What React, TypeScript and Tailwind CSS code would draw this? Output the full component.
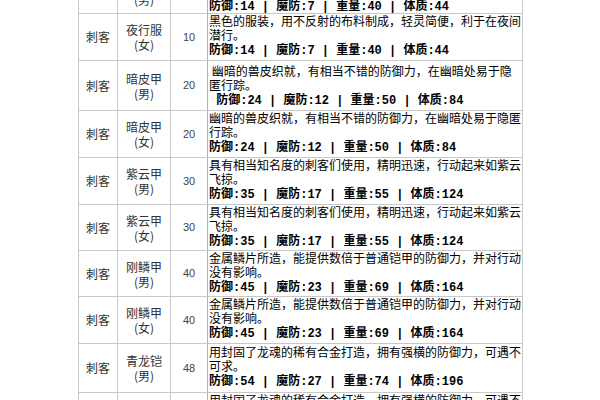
const cjk = "font-['Noto_Sans_CJK_SC',sans-serif]";

type Row = {
  name: string;
  sex: string;
  level: number;
  lines: string[];
  stats: string;
  h: string;
  pad?: string;
};

const yexing = ['黑色的服装，用不反射的布料制成，轻灵简便，利于在夜间', '潜行。'];
const qinglong = ['用封固了龙魂的稀有合金打造，拥有强横的防御力，可遇不', '可求。'];
const ziyun = ['具有相当知名度的刺客们使用，精明迅速，行动起来如紫云', '飞掠。'];
const gangLin = ['金属鳞片所造，能提供数倍于普通铠甲的防御力，并对行动', '没有影响。'];

const rows: Row[] = [
  { name: '夜行服', sex: '(男)', level: 10, lines: yexing, stats: '防御:14 | 魔防:7 | 重量:40 | 体质:44', h: 'h-[44px]' },
  { name: '夜行服', sex: '(女)', level: 10, lines: yexing, stats: '防御:14 | 魔防:7 | 重量:40 | 体质:44', h: 'h-[47px]' },
  {
    name: '暗皮甲', sex: '(男)', level: 20,
    lines: [' 幽暗的兽皮织就，有相当不错的防御力，在幽暗处易于隐', '匿行踪。'],
    stats: ' 防御:24 | 魔防:12 | 重量:50 | 体质:84', h: 'h-[50px]', pad: 'pt-[3px]',
  },
  { name: '暗皮甲', sex: '(女)', level: 20, lines: ['幽暗的兽皮织就，有相当不错的防御力，在幽暗处易于隐匿', '行踪。'], stats: '防御:24 | 魔防:12 | 重量:50 | 体质:84', h: 'h-[47px]' },
  { name: '紫云甲', sex: '(男)', level: 30, lines: ziyun, stats: '防御:35 | 魔防:17 | 重量:55 | 体质:124', h: 'h-[47px]' },
  { name: '紫云甲', sex: '(女)', level: 30, lines: ziyun, stats: '防御:35 | 魔防:17 | 重量:55 | 体质:124', h: 'h-[46px]' },
  { name: '刚鳞甲', sex: '(男)', level: 40, lines: gangLin, stats: '防御:45 | 魔防:23 | 重量:69 | 体质:164', h: 'h-[46px]' },
  { name: '刚鳞甲', sex: '(女)', level: 40, lines: gangLin, stats: '防御:45 | 魔防:23 | 重量:69 | 体质:164', h: 'h-[47px]' },
  { name: '青龙铠', sex: '(男)', level: 48, lines: qinglong, stats: '防御:54 | 魔防:27 | 重量:74 | 体质:196', h: 'h-[49px]', pad: 'pt-[1px]' },
  { name: '青龙铠', sex: '(女)', level: 48, lines: qinglong, stats: '防御:54 | 魔防:27 | 重量:74 | 体质:196', h: 'h-[47px]' },
];

function ArmorRow({ row }: { row: Row }) {
  return (
    <div className={`grid grid-cols-[39px_53px_37px_315px] border-b border-[#c8c8c8] ${row.h}`}>
      <div className={`flex items-center justify-center border-r border-[#c8c8c8] text-[12px] text-[#333] ${cjk}`}>
        刺客
      </div>
      <div className={`flex items-center justify-center border-r border-[#c8c8c8] text-center text-[12px] leading-[15px] text-[#333] ${cjk}`}>
        <p>
          {row.name}
          <br />
          {row.sex}
        </p>
      </div>
      <div className="flex items-center justify-center border-r border-[#b4b4b4] font-['Liberation_Sans',sans-serif] text-[11px] text-[#444]">
        {row.level}
      </div>
      <div className={`border-r border-[#c8c8c8] pl-[1px] ${row.pad ?? 'pt-0'} text-black`}>
        <p className={`whitespace-pre text-[12px] leading-[14px] ${cjk}`}>
          {row.lines.map((l, i) => (
            <span key={i}>
              {l}
              <br />
            </span>
          ))}
          <b className="font-bold font-['Liberation_Mono','Noto_Sans_CJK_SC',monospace]">{row.stats}</b>
        </p>
      </div>
    </div>
  );
}

export default function App() {
  return (
    <div className="h-[400px] w-[600px] overflow-hidden bg-white">
      <div className="ml-[78px] mt-[-30px] w-[445px] border-l border-[#c8c8c8]">
        {rows.map((r, i) => (
          <ArmorRow key={i} row={r} />
        ))}
      </div>
    </div>
  );
}
